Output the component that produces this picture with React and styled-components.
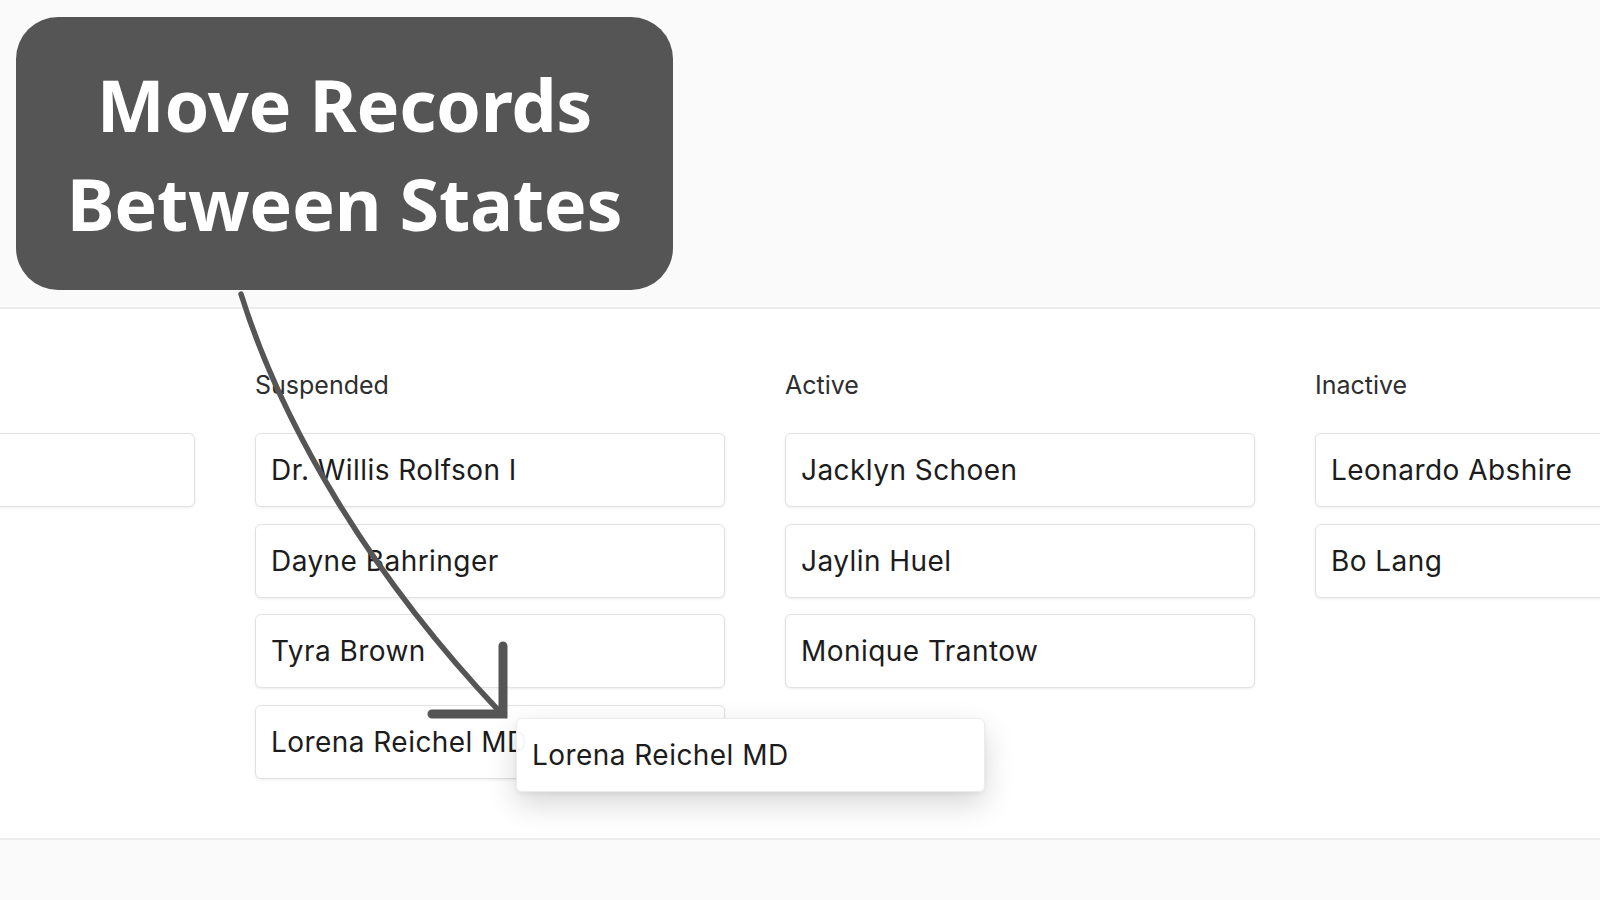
import React from "react";
import styled, { createGlobalStyle } from "styled-components";

const GlobalStyle = createGlobalStyle`
  html, body { margin: 0; padding: 0; }
  body {
    background: #fafafa;
    font-family: Inter, "Noto Sans", "Liberation Sans", sans-serif;
    color: #1c1c1c;
  }
  * { box-sizing: border-box; }
`;

const Page = styled.div`
  position: relative;
  width: 1600px;
  height: 900px;
  overflow: hidden;
  background: #fafafa;
`;

const TopBand = styled.header`
  height: 309px;
  padding: 17px 16px;
  background: #fafafa;
  border-bottom: 2px solid #ececec;
`;

const Callout = styled.div`
  width: 657px;
  height: 273px;
  border-radius: 42px;
  background: #555555;
  color: #ffffff;
  display: flex;
  flex-direction: column;
  align-items: center;
  justify-content: center;
  font-family: "Noto Sans", "Open Sans", sans-serif;
  font-weight: 700;
  font-size: 72px;
  line-height: 99px;
  letter-spacing: -0.3px;
  text-align: center;
`;

const Board = styled.main`
  height: 531px;
  background: #ffffff;
  border-bottom: 2px solid #ececec;
  overflow: hidden;
  padding-top: 62px;
`;

const Track = styled.div`
  display: flex;
  gap: 60px;
  margin-left: -275px;
`;

const Column = styled.section`
  width: 470px;
  flex-shrink: 0;
  display: flex;
  flex-direction: column;
`;

const ColumnTitle = styled.h3`
  margin: 0 0 33px;
  min-height: 29px;
  font-size: 25px;
  font-weight: 400;
  line-height: 29px;
  color: #2e2e2e;
`;

const CardList = styled.div`
  display: flex;
  flex-direction: column;
  gap: 16.7px;
`;

const Card = styled.div`
  height: 74px;
  display: flex;
  align-items: center;
  padding: 0 15px;
  background: #ffffff;
  border: 1px solid #e2e2e2;
  border-radius: 6px;
  box-shadow: 0 1px 3px rgba(0, 0, 0, 0.08);
  font-size: 28px;
  line-height: 34px;
  letter-spacing: 0.45px;
  color: #1c1c1c;
  white-space: nowrap;
`;

const DragGhost = styled(Card)`
  position: absolute;
  left: 516px;
  top: 718px;
  width: 469px;
  background: rgba(255, 255, 255, 0.96);
  border-color: #ececec;
  box-shadow: 0 12px 30px rgba(0, 0, 0, 0.16), 0 2px 4px rgba(0, 0, 0, 0.05);
`;

const Overlay = styled.svg`
  position: absolute;
  left: 0;
  top: 0;
  width: 1600px;
  height: 900px;
  pointer-events: none;
`;

const columns = [
  { id: "scrolled", title: "", cards: [""] },
  {
    id: "suspended",
    title: "Suspended",
    cards: ["Dr. Willis Rolfson I", "Dayne Bahringer", "Tyra Brown", "Lorena Reichel MD"],
  },
  { id: "active", title: "Active", cards: ["Jacklyn Schoen", "Jaylin Huel", "Monique Trantow"] },
  { id: "inactive", title: "Inactive", cards: ["Leonardo Abshire", "Bo Lang"] },
];

export default function App() {
  return (
    <>
      <GlobalStyle />
      <Page>
        <TopBand>
          <Callout>
            <div>Move Records</div>
            <div>Between States</div>
          </Callout>
        </TopBand>
        <Board>
          <Track>
            {columns.map((col) => (
              <Column key={col.id}>
                <ColumnTitle>{col.title}</ColumnTitle>
                <CardList>
                  {col.cards.map((name, i) => (
                    <Card key={col.id + i}>{name}</Card>
                  ))}
                </CardList>
              </Column>
            ))}
          </Track>
        </Board>
        <DragGhost>Lorena Reichel MD</DragGhost>
        <Overlay viewBox="0 0 1600 900">
          <path
            d="M241 294 C 282 425, 370 575, 500 712"
            fill="none"
            stroke="#555555"
            strokeWidth="5.5"
            strokeLinecap="round"
          />
          <path
            d="M432 714 L503 714 L503 646"
            fill="none"
            stroke="#555555"
            strokeWidth="9"
            strokeLinecap="round"
            strokeLinejoin="miter"
          />
        </Overlay>
      </Page>
    </>
  );
}
